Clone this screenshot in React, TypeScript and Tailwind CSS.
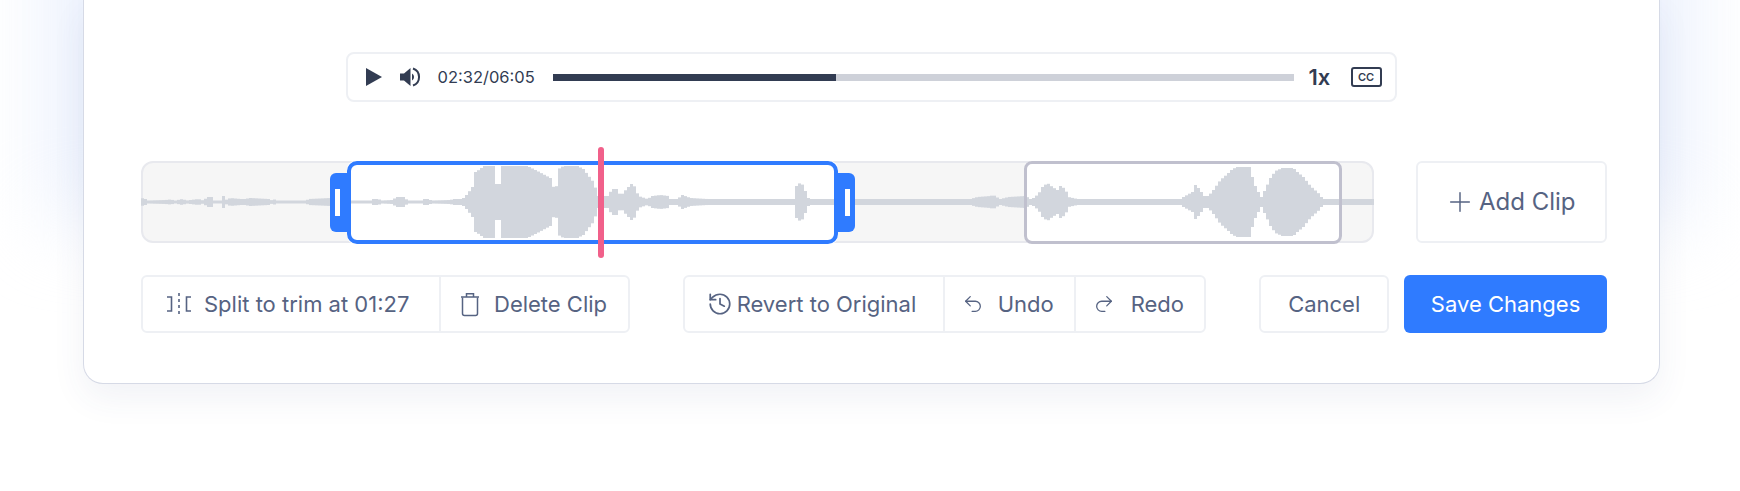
import { Plus, History, Undo2, Redo2 } from "lucide-react";

// [x, half height] keypoints of the waveform, x measured on the page
const envelope: [number, number][] = [
  [141, 4], [145, 3], [147, 1.5], [165, 2], [170, 2.5], [175, 1.500], [182, 3], [186, 1.500], [198, 3], [203, 1.500],
  [207, 5], [212, 5], [214, 1.500], [222, 1.500], [223, 6], [224, 1.500], [230, 4], [240, 3], [244, 3], [250, 4],
  [268, 3], [272, 1.500], [275, 3], [277, 1.500], [306, 1.500], [308, 3], [330, 4], [345, 1.500], [370, 1.500], [373, 3],
  [378, 3], [381, 1.500], [392, 2], [396, 5], [404, 5], [407, 1.500], [421, 1.500], [424, 3], [428, 3], [431, 1.500],
  [450, 2], [453, 3], [462, 3], [467, 8], [472, 15], [475, 30], [480, 33], [483, 36], [494, 36], [495, 18], [501, 18],
  [502, 36], [527, 36], [537, 31], [550, 24], [552, 15], [557, 16], [558, 33], [563, 36], [577, 36], [583, 33],
  [593, 20], [598, 6], [607, 6], [612, 13], [617, 13], [620, 6], [627, 14], [632, 19], [635, 14], [638, 6], [647, 3],
  [652, 6], [660, 7], [668, 6], [670, 3], [677, 3], [682, 7], [690, 4], [707, 3], [793, 3], [794, 13], [798, 19],
  [803, 17], [807, 5], [809, 3], [970, 3], [977, 5], [990, 6], [993, 7], [996, 5], [1000, 3], [1008, 5], [1025, 6],
  [1030, 3], [1033, 4], [1038, 8], [1042, 15], [1047, 19], [1052, 15], [1057, 12], [1060, 16], [1065, 13], [1068, 5],
  [1077, 3], [1180, 3], [1183, 5], [1192, 10], [1195, 17], [1200, 12], [1203, 6], [1208, 6], [1213, 12], [1220, 22],
  [1227, 28], [1232, 33], [1237, 35], [1250, 35], [1253, 20], [1258, 10], [1261, 5], [1265, 13], [1270, 24], [1275, 31],
  [1282, 34], [1293, 34], [1297, 30], [1303, 25], [1310, 16], [1320, 7], [1322, 3], [1373, 3],
];

function heightAt(x: number) {
  for (let i = 1; i < envelope.length; i++) {
    const [x0, h0] = envelope[i - 1];
    const [x1, h1] = envelope[i];
    if (x <= x1) return h0 + ((h1 - h0) * (x - x0)) / (x1 - x0);
  }
  return 3;
}

function Waveform() {
  const bars = [];
  for (let x = 141; x < 1373; x += 3) {
    const h = heightAt(x + 1);
    bars.push(<rect key={x} x={x - 141} y={41 - h} width={3} height={h * 2} />);
  }
  return (
    <svg className="absolute inset-0" width={1233} height={82} fill="#d2d6dd">
      {bars}
    </svg>
  );
}

function Handle({ side }: { side: "left" | "right" }) {
  return (
    <div
      className={
        side === "left"
          ? "absolute left-[187px] top-[10px] w-[20px] h-[59px] bg-[#2f7bff] rounded-l-[6px] flex items-center justify-start pl-[5px]"
          : "absolute left-[692px] top-[10px] w-[20px] h-[59px] bg-[#2f7bff] rounded-r-[6px] flex items-center justify-end pr-[5px]"
      }
    >
      <div className="w-[5px] h-[27px] bg-white" />
    </div>
  );
}

function SplitIcon() {
  return (
    <svg width="26" height="26" viewBox="0 0 26 26" fill="none" stroke="#566382" strokeWidth="1.6">
      <path d="M1 6h4.500v14H1" />
      <path d="M25 6h-4.500v14H25" />
      <path d="M13 2v3M13 8v3M13 14v3M13 20v3" />
    </svg>
  );
}

function TrashIcon() {
  return (
    <svg width="20" height="25" viewBox="0 0 20 25" fill="none" stroke="#566382" strokeWidth="1.5">
      <path d="M1 5h18" />
      <path d="M6.500 5V1.800h7V5" />
      <path d="M2.500 5.500v16a2 2 0 0 0 2 2h11a2 2 0 0 0 2-2v-16" />
    </svg>
  );
}

function VolumeIcon() {
  return (
    <svg width="21" height="20" viewBox="0 0 21 20" fill="#323c52">
      <path d="M0 6.500h4L10.500 1v18L4 13.500H0z" />
      <path d="M12 6.500a4 4 0 0 1 0 7z" />
      <path d="M13 1.500a9 9 0 0 1 0 17" fill="none" stroke="#323c52" strokeWidth="2" />
    </svg>
  );
}

export default function App() {
  return (
    <div className="relative h-[491px] w-[1740px] overflow-hidden bg-white font-['Inter',sans-serif] text-[#566382]">
      {/* blue glow behind the card */}
      <div className="absolute left-[50px] top-[-200px] w-[1640px] h-[420px] bg-[#eaf0fd] blur-[40px]" />

      <div className="relative ml-[83px] w-[1577px] h-[384px] bg-white border border-t-0 border-[#d6dae6] rounded-b-[20px] shadow-[0_14px_34px_rgba(60,70,130,0.07)] flex flex-col pt-[52px] pl-[57px] pr-[52px]">
        {/* player */}
        <div className="self-center -translate-x-[3px] w-[1051px] h-[50px] border-2 border-[#eef0f4] rounded-[8px] flex items-center text-[#323c52]">
          <svg className="ml-[18px]" width="16" height="18" viewBox="0 0 16 18" fill="#323c52">
            <path d="M0 0l16 9-16 9z" />
          </svg>
          <div className="ml-[18px]">
            <VolumeIcon />
          </div>
          <span className="ml-[17px] w-[115px] text-[16.500px] leading-none">02:32/06:05</span>
          <div className="w-[741px] h-[7px] bg-[#ced1d9]">
            <div className="w-[283px] h-full bg-[#323c52]" />
          </div>
          <span className="ml-[15px] w-[42px] text-[22px] font-semibold leading-none">1x</span>
          <div className="w-[31px] h-[20px] border-2 border-[#323c52] rounded-[3px] flex items-center justify-center text-[11px] font-semibold leading-none">
            CC
          </div>
        </div>

        {/* timeline */}
        <div className="mt-[59px] flex justify-between items-stretch h-[82px]">
          <div className="relative w-[1233px] h-[82px] bg-[#f6f6f6] border-2 border-[#e8e9ee] rounded-[12px]">
            <div className="absolute left-[204px] -top-[2px] w-[491px] h-[83px] bg-white rounded-[8px]" />
            <div className="absolute left-[881px] -top-[2px] w-[318px] h-[83px] bg-white rounded-[8px]" />
            <div className="absolute -left-[2px] -top-[2px]">
              <Waveform />
            </div>
            <div className="absolute left-[881px] -top-[2px] w-[318px] h-[83px] border-[3px] border-[#c0c0ce] rounded-[8px]" />
            <Handle side="left" />
            <Handle side="right" />
            <div className="absolute left-[204px] -top-[2px] w-[491px] h-[83px] border-4 border-[#2f7bff] rounded-[10px]" />
            <div className="absolute left-[455px] -top-[16px] w-[6px] h-[111px] bg-[#f1608a] rounded-full" />
          </div>
          <button className="w-[191px] border-2 border-[#eef0f4] rounded-[6px] flex items-center pl-[26px] gap-[3px] text-[24px]">
            <Plus size={32} strokeWidth={1.1} />
            Add Clip
          </button>
        </div>

        {/* actions */}
        <div className="mt-[32px] flex items-stretch h-[58px] text-[22px]">
          <div className="w-[489px] flex border-2 border-[#eef0f4] rounded-[6px]">
            <button className="w-[298px] flex items-center pl-[23px] gap-[12px] border-r-2 border-[#eef0f4]">
              <SplitIcon />
              Split to trim at 01:27
            </button>
            <button className="flex-1 flex items-center pl-[19px] gap-[14px]">
              <TrashIcon />
              Delete Clip
            </button>
          </div>
          <div className="ml-[53px] w-[524px] flex border-2 border-[#eef0f4] rounded-[6px]">
            <button className="w-[260px] flex items-center pl-[22px] gap-[4px] border-r-2 border-[#eef0f4]">
              <History size={26} strokeWidth={1.6} />
              Revert to Original
            </button>
            <button className="w-[131px] flex items-center pl-[17px] gap-[14px] border-r-2 border-[#eef0f4]">
              <Undo2 size={22} strokeWidth={1.4} />
              Undo
            </button>
            <button className="flex-1 flex items-center pl-[17px] gap-[16px]">
              <Redo2 size={22} strokeWidth={1.4} />
              Redo
            </button>
          </div>
          <button className="ml-[53px] w-[130px] border-2 border-[#eef0f4] rounded-[6px]">Cancel</button>
          <button className="ml-[15px] w-[203px] bg-[#2f7bff] rounded-[6px] text-white">Save Changes</button>
        </div>
      </div>
    </div>
  );
}
